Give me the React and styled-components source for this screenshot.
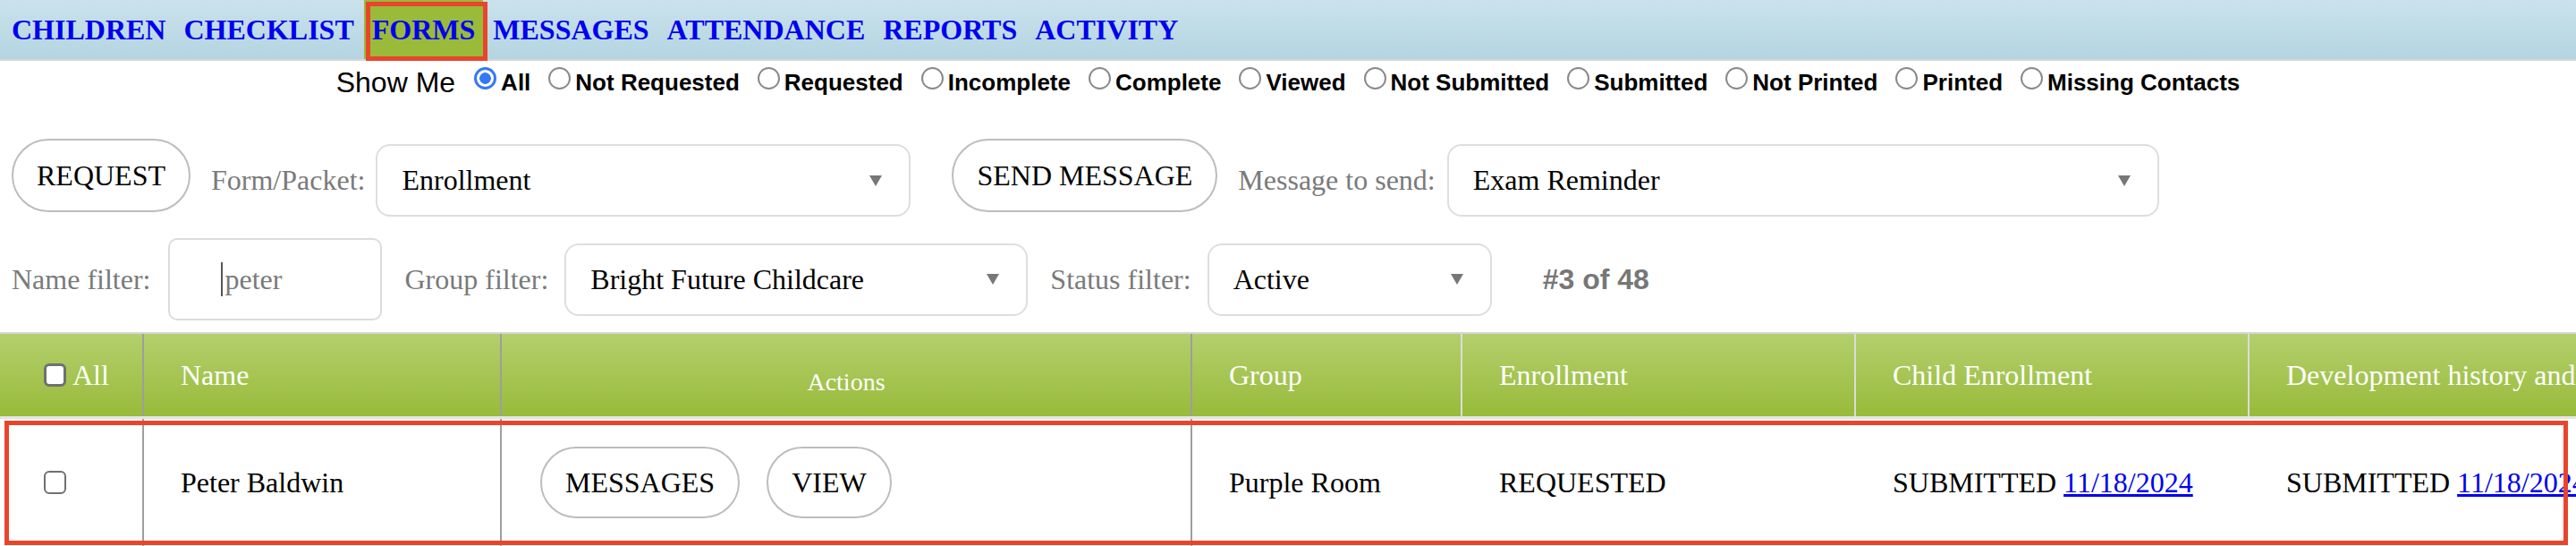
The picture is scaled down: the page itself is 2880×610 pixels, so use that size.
import styled, { createGlobalStyle } from "styled-components";

const serif = `"Liberation Serif", "Times New Roman", serif`;
const sans = `"Liberation Sans", Arial, sans-serif`;
const cols = "161px 400px 772px 302px 440px 440px 440px";

const GlobalStyle = createGlobalStyle`
  html, body {
    margin: 0;
    padding: 0;
    overflow: hidden;
    background: #fff;
  }
  body {
    font-family: ${serif};
  }
`;

const Nav = styled.nav`
  display: flex;
  gap: 2px;
  height: 66px;
  padding-left: 4px;
  background: linear-gradient(#cbe2ec, #b3d5e1);
  border-bottom: 2px solid #d6d6d6;
`;

const NavItem = styled.a`
  position: relative;
  display: flex;
  align-items: center;
  padding: 0 9px;
  font: bold 32px ${serif};
  color: #0000ee;
  text-decoration: none;
  white-space: nowrap;
  background: ${(p) => (p.$active ? "#9aba3a" : "transparent")};

  ${(p) =>
    p.$active &&
    `
    &::after {
      content: "";
      position: absolute;
      left: 2px;
      top: 2px;
      right: -5px;
      bottom: -2px;
      border: 5px solid #e8452c;
    }
  `}
`;

const ShowRow = styled.div`
  display: flex;
  justify-content: center;
  align-items: center;
  height: 48px;
  font-family: ${sans};
`;

const ShowLabel = styled.span`
  font-size: 32px;
  margin-right: 21px;
`;

const Option = styled.label`
  display: flex;
  align-items: center;
  gap: 5px;
  font-size: 26px;
  font-weight: bold;
  white-space: nowrap;

  & + & {
    margin-left: 20px;
  }
`;

const Radio = styled.input.attrs({ type: "radio", name: "show" })`
  appearance: none;
  box-sizing: border-box;
  width: 25px;
  height: 25px;
  margin: 0 0 9px 0;
  border: 2px solid #8a8a8a;
  border-radius: 50%;
  background: #fff;

  &:checked {
    border: 3px solid #3478f6;
    background: radial-gradient(circle, #3478f6 0 6px, #fff 6.6px);
  }
`;

const ActionRow = styled.div`
  display: flex;
  align-items: ${(p) => p.$align || "center"};
  height: ${(p) => p.$h}px;
  margin-top: ${(p) => p.$top}px;
  padding-left: 13px;
`;

const PillButton = styled.button`
  flex-shrink: 0;
  box-sizing: border-box;
  height: ${(p) => p.$h || 82}px;
  margin-left: ${(p) => p.$gap || 0}px;
  padding: 0 26px;
  border: 2px solid #bdbdbd;
  border-radius: 42px;
  background: #fff;
  color: #000;
  font: 32px ${serif};
  white-space: nowrap;
`;

const FieldLabel = styled.span`
  flex-shrink: 0;
  margin: ${(p) => p.$mt || 0}px ${(p) => p.$after}px 0 ${(p) => p.$before}px;
  color: #7a7a7a;
  font: 32px ${serif};
  line-height: 81px;
  white-space: nowrap;
`;

const SelectBox = styled.div`
  flex-shrink: 0;
  box-sizing: border-box;
  display: flex;
  align-items: center;
  justify-content: space-between;
  width: ${(p) => p.$w}px;
  height: 81px;
  margin-top: ${(p) => p.$mt || 0}px;
  padding: 0 30px 0 27px;
  border: 2px solid #dedede;
  border-radius: 16px;
  background: #fff;
  color: #000;
  font: 32px ${serif};
  white-space: nowrap;
`;

const Arrow = styled.span`
  width: 0;
  height: 0;
  border-left: 7.5px solid transparent;
  border-right: 7.5px solid transparent;
  border-top: 12px solid #777;
`;

const NameField = styled.div`
  position: relative;
  flex-shrink: 0;
`;

const NameInput = styled.input`
  box-sizing: border-box;
  display: block;
  width: 239px;
  height: 92px;
  padding: 0 0 0 61px;
  border: 2px solid #dcdcdc;
  border-radius: 10px;
  outline: none;
  color: #000;
  font: 32px ${serif};

  &::placeholder {
    color: #7a7a7a;
  }
`;

const Caret = styled.span`
  position: absolute;
  left: 59px;
  top: 27px;
  width: 2px;
  height: 38px;
  background: #555;
`;

const Counter = styled.span`
  margin-left: 57px;
  color: #777;
  font: bold 32px ${sans};
  white-space: nowrap;
`;

const Table = styled.div`
  width: max-content;
  margin-top: 13px;
`;

const HeadRow = styled.div`
  display: grid;
  grid-template-columns: ${cols};
  height: 92px;
  border-top: 2px solid #d6d6d6;
  border-bottom: 3px solid #e4e4e4;
  background: linear-gradient(#b4cf6d, #98bb3a);
`;

const HeadCell = styled.div`
  box-sizing: border-box;
  display: flex;
  align-items: center;
  justify-content: ${(p) => (p.$center ? "center" : "flex-start")};
  gap: 7px;
  padding-left: ${(p) => (p.$center ? 0 : p.$pad ?? 41)}px;
  border-right: 2px solid ${(p) => p.$line || "transparent"};
  overflow: hidden;
  color: #fff;
  font: ${(p) => (p.$small ? 28 : 32)}px ${serif};
  white-space: nowrap;
`;

const LowText = styled.span`
  margin-top: 16px;
`;

const BodyRow = styled.div`
  position: relative;
  display: grid;
  grid-template-columns: ${cols};
  height: 142px;
`;

const Cell = styled.div`
  box-sizing: border-box;
  display: flex;
  align-items: center;
  gap: 30px;
  padding-left: ${(p) => p.$pad ?? 41}px;
  border-right: 2px solid ${(p) => (p.$line ? "#9e9e9e" : "transparent")};
  color: #000;
  font: 32px ${serif};
  white-space: nowrap;
`;

const DateLink = styled.a`
  color: #0000ee;
  text-decoration: underline;
`;

const RowMark = styled.div`
  position: absolute;
  left: 5px;
  top: 2px;
  box-sizing: border-box;
  width: 2866px;
  height: 139px;
  border: 5px solid #e8452c;
  pointer-events: none;
`;

const Check = styled.input.attrs({ type: "checkbox" })`
  flex-shrink: 0;
  appearance: none;
  box-sizing: border-box;
  width: 25px;
  height: 26px;
  margin: 0;
  border: ${(p) => (p.$thick ? 3 : 2)}px solid #707070;
  border-radius: 6px;
  background: #fff;
`;

const navLinks = ["CHILDREN", "CHECKLIST", "FORMS", "MESSAGES", "ATTENDANCE", "REPORTS", "ACTIVITY"];

const showOptions = [
  "All",
  "Not Requested",
  "Requested",
  "Incomplete",
  "Complete",
  "Viewed",
  "Not Submitted",
  "Submitted",
  "Not Printed",
  "Printed",
  "Missing Contacts",
];

const gray = "#9e9e9e";
const light = "#dcdcdc";

export default function App() {
  return (
    <>
      <GlobalStyle />
      <Nav>
        {navLinks.map((name) => (
          <NavItem key={name} href="#" $active={name === "FORMS"}>
            {name}
          </NavItem>
        ))}
      </Nav>

      <ShowRow>
        <ShowLabel>Show Me</ShowLabel>
        {showOptions.map((opt, i) => (
          <Option key={opt}>
            <Radio defaultChecked={i === 0} />
            {opt}
          </Option>
        ))}
      </ShowRow>

      <ActionRow $align="flex-start" $h={87} $top={39}>
        <PillButton>REQUEST</PillButton>
        <FieldLabel $mt={6} $before={23} $after={12}>
          Form/Packet:
        </FieldLabel>
        <SelectBox $w={598} $mt={6}>
          Enrollment
          <Arrow />
        </SelectBox>
        <PillButton $gap={46}>SEND MESSAGE</PillButton>
        <FieldLabel $mt={6} $before={23} $after={13}>
          Message to send:
        </FieldLabel>
        <SelectBox $w={796} $mt={6}>
          Exam Reminder
          <Arrow />
        </SelectBox>
      </ActionRow>

      <ActionRow $h={92} $top={24}>
        <FieldLabel $before={0} $after={20}>
          Name filter:
        </FieldLabel>
        <NameField>
          <NameInput placeholder="peter" />
          <Caret />
        </NameField>
        <FieldLabel $before={25} $after={18}>
          Group filter:
        </FieldLabel>
        <SelectBox $w={518}>
          Bright Future Childcare
          <Arrow />
        </SelectBox>
        <FieldLabel $before={25} $after={18}>
          Status filter:
        </FieldLabel>
        <SelectBox $w={318}>
          Active
          <Arrow />
        </SelectBox>
        <Counter>#3 of 48</Counter>
      </ActionRow>

      <Table>
        <HeadRow>
          <HeadCell $pad={49} $line={gray}>
            <Check $thick />
            All
          </HeadCell>
          <HeadCell $line={gray}>Name</HeadCell>
          <HeadCell $center $small $line={gray}>
            <LowText>Actions</LowText>
          </HeadCell>
          <HeadCell $line={light}>Group</HeadCell>
          <HeadCell $line={light}>Enrollment</HeadCell>
          <HeadCell $line={light}>Child Enrollment</HeadCell>
          <HeadCell>Development history and</HeadCell>
        </HeadRow>

        <BodyRow>
          <Cell $pad={49} $line>
            <Check />
          </Cell>
          <Cell $line>Peter Baldwin</Cell>
          <Cell $pad={43} $line>
            <PillButton $h={80}>MESSAGES</PillButton>
            <PillButton $h={80}>VIEW</PillButton>
          </Cell>
          <Cell>Purple Room</Cell>
          <Cell>REQUESTED</Cell>
          <Cell>
            <span>
              SUBMITTED <DateLink href="#">11/18/2024</DateLink>
            </span>
          </Cell>
          <Cell>
            <span>
              SUBMITTED <DateLink href="#">11/18/2024</DateLink>
            </span>
          </Cell>
          <RowMark />
        </BodyRow>
      </Table>
    </>
  );
}
